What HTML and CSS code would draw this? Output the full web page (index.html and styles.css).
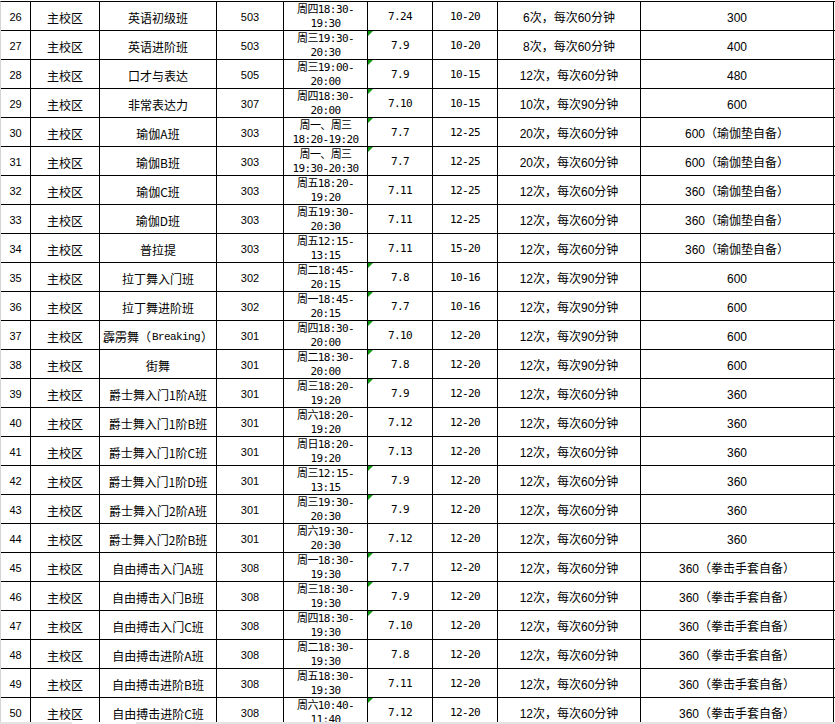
FILE: index.html
```html
<!DOCTYPE html>
<html lang="zh-CN">
<head>
<meta charset="utf-8">
<title>课程表</title>
<link rel="stylesheet" href="styles.css">
</head>
<body>
<div class="page">
  <div class="sheet">
    <div class="row"><div class="c n">26</div><div class="c">主校区</div><div class="c">英语初级班</div><div class="c n">503</div><div class="c m two">周四18:30-<br>19:30</div><div class="c m">7.24</div><div class="c m">10-20</div><div class="c s">6次，每次60分钟</div><div class="c s">300</div></div>
    <div class="row"><div class="c n">27</div><div class="c">主校区</div><div class="c">英语进阶班</div><div class="c n">503</div><div class="c m two">周三19:30-<br>20:30</div><div class="c m tri">7.9</div><div class="c m">10-20</div><div class="c s">8次，每次60分钟</div><div class="c s">400</div></div>
    <div class="row"><div class="c n">28</div><div class="c">主校区</div><div class="c">口才与表达</div><div class="c n">505</div><div class="c m two">周三19:00-<br>20:00</div><div class="c m tri">7.9</div><div class="c m">10-15</div><div class="c s">12次，每次60分钟</div><div class="c s">480</div></div>
    <div class="row"><div class="c n">29</div><div class="c">主校区</div><div class="c">非常表达力</div><div class="c n">307</div><div class="c m two">周四18:30-<br>20:00</div><div class="c m tri">7.10</div><div class="c m">10-15</div><div class="c s">10次，每次90分钟</div><div class="c s">600</div></div>
    <div class="row"><div class="c n">30</div><div class="c">主校区</div><div class="c">瑜伽A班</div><div class="c n">303</div><div class="c m two">周一、周三<br>18:20-19:20</div><div class="c m tri">7.7</div><div class="c m">12-25</div><div class="c s">20次，每次60分钟</div><div class="c s">600（瑜伽垫自备）</div></div>
    <div class="row"><div class="c n">31</div><div class="c">主校区</div><div class="c">瑜伽B班</div><div class="c n">303</div><div class="c m two">周一、周三<br>19:30-20:30</div><div class="c m tri">7.7</div><div class="c m">12-25</div><div class="c s">20次，每次60分钟</div><div class="c s">600（瑜伽垫自备）</div></div>
    <div class="row"><div class="c n">32</div><div class="c">主校区</div><div class="c">瑜伽C班</div><div class="c n">303</div><div class="c m two">周五18:20-<br>19:20</div><div class="c m">7.11</div><div class="c m">12-25</div><div class="c s">12次，每次60分钟</div><div class="c s">360（瑜伽垫自备）</div></div>
    <div class="row"><div class="c n">33</div><div class="c">主校区</div><div class="c">瑜伽D班</div><div class="c n">303</div><div class="c m two">周五19:30-<br>20:30</div><div class="c m">7.11</div><div class="c m">12-25</div><div class="c s">12次，每次60分钟</div><div class="c s">360（瑜伽垫自备）</div></div>
    <div class="row"><div class="c n">34</div><div class="c">主校区</div><div class="c">普拉提</div><div class="c n">303</div><div class="c m two">周五12:15-<br>13:15</div><div class="c m">7.11</div><div class="c m">15-20</div><div class="c s">12次，每次60分钟</div><div class="c s">360（瑜伽垫自备）</div></div>
    <div class="row"><div class="c n">35</div><div class="c">主校区</div><div class="c">拉丁舞入门班</div><div class="c n">302</div><div class="c m two">周二18:45-<br>20:15</div><div class="c m tri">7.8</div><div class="c m">10-16</div><div class="c s">12次，每次90分钟</div><div class="c s">600</div></div>
    <div class="row"><div class="c n">36</div><div class="c">主校区</div><div class="c">拉丁舞进阶班</div><div class="c n">302</div><div class="c m two">周一18:45-<br>20:15</div><div class="c m tri">7.7</div><div class="c m">10-16</div><div class="c s">12次，每次90分钟</div><div class="c s">600</div></div>
    <div class="row"><div class="c n">37</div><div class="c">主校区</div><div class="c">霹雳舞（<span class="lat">Breaking</span>）</div><div class="c n">301</div><div class="c m two">周四18:30-<br>20:00</div><div class="c m tri">7.10</div><div class="c m">12-20</div><div class="c s">12次，每次90分钟</div><div class="c s">600</div></div>
    <div class="row"><div class="c n">38</div><div class="c">主校区</div><div class="c">街舞</div><div class="c n">301</div><div class="c m two">周二18:30-<br>20:00</div><div class="c m tri">7.8</div><div class="c m">12-20</div><div class="c s">12次，每次90分钟</div><div class="c s">600</div></div>
    <div class="row"><div class="c n">39</div><div class="c">主校区</div><div class="c">爵士舞入门1阶A班</div><div class="c n">301</div><div class="c m two">周三18:20-<br>19:20</div><div class="c m tri">7.9</div><div class="c m">12-20</div><div class="c s">12次，每次60分钟</div><div class="c s">360</div></div>
    <div class="row"><div class="c n">40</div><div class="c">主校区</div><div class="c">爵士舞入门1阶B班</div><div class="c n">301</div><div class="c m two">周六18:20-<br>19:20</div><div class="c m">7.12</div><div class="c m">12-20</div><div class="c s">12次，每次60分钟</div><div class="c s">360</div></div>
    <div class="row"><div class="c n">41</div><div class="c">主校区</div><div class="c">爵士舞入门1阶C班</div><div class="c n">301</div><div class="c m two">周日18:20-<br>19:20</div><div class="c m">7.13</div><div class="c m">12-20</div><div class="c s">12次，每次60分钟</div><div class="c s">360</div></div>
    <div class="row"><div class="c n">42</div><div class="c">主校区</div><div class="c">爵士舞入门1阶D班</div><div class="c n">301</div><div class="c m two">周三12:15-<br>13:15</div><div class="c m tri">7.9</div><div class="c m">12-20</div><div class="c s">12次，每次60分钟</div><div class="c s">360</div></div>
    <div class="row"><div class="c n">43</div><div class="c">主校区</div><div class="c">爵士舞入门2阶A班</div><div class="c n">301</div><div class="c m two">周三19:30-<br>20:30</div><div class="c m tri">7.9</div><div class="c m">12-20</div><div class="c s">12次，每次60分钟</div><div class="c s">360</div></div>
    <div class="row"><div class="c n">44</div><div class="c">主校区</div><div class="c">爵士舞入门2阶B班</div><div class="c n">301</div><div class="c m two">周六19:30-<br>20:30</div><div class="c m">7.12</div><div class="c m">12-20</div><div class="c s">12次，每次60分钟</div><div class="c s">360</div></div>
    <div class="row"><div class="c n">45</div><div class="c">主校区</div><div class="c">自由搏击入门A班</div><div class="c n">308</div><div class="c m two">周一18:30-<br>19:30</div><div class="c m tri">7.7</div><div class="c m">12-20</div><div class="c s">12次，每次60分钟</div><div class="c s">360（拳击手套自备）</div></div>
    <div class="row"><div class="c n">46</div><div class="c">主校区</div><div class="c">自由搏击入门B班</div><div class="c n">308</div><div class="c m two">周三18:30-<br>19:30</div><div class="c m tri">7.9</div><div class="c m">12-20</div><div class="c s">12次，每次60分钟</div><div class="c s">360（拳击手套自备）</div></div>
    <div class="row"><div class="c n">47</div><div class="c">主校区</div><div class="c">自由搏击入门C班</div><div class="c n">308</div><div class="c m two">周四18:30-<br>19:30</div><div class="c m tri">7.10</div><div class="c m">12-20</div><div class="c s">12次，每次60分钟</div><div class="c s">360（拳击手套自备）</div></div>
    <div class="row"><div class="c n">48</div><div class="c">主校区</div><div class="c">自由搏击进阶A班</div><div class="c n">308</div><div class="c m two">周二18:30-<br>19:30</div><div class="c m">7.8</div><div class="c m">12-20</div><div class="c s">12次，每次60分钟</div><div class="c s">360（拳击手套自备）</div></div>
    <div class="row"><div class="c n">49</div><div class="c">主校区</div><div class="c">自由搏击进阶B班</div><div class="c n">308</div><div class="c m two">周五18:30-<br>19:30</div><div class="c m">7.11</div><div class="c m">12-20</div><div class="c s">12次，每次60分钟</div><div class="c s">360（拳击手套自备）</div></div>
    <div class="row"><div class="c n">50</div><div class="c">主校区</div><div class="c">自由搏击进阶C班</div><div class="c n">308</div><div class="c m two">周六10:40-<br>11:40</div><div class="c m tri">7.12</div><div class="c m">12-20</div><div class="c s">12次，每次60分钟</div><div class="c s">360（拳击手套自备）</div></div>
  </div>
  <div class="tabs"><div class="tab"></div></div>
</div>
</body>
</html>
```

FILE: styles.css
```css
html, body {
  margin: 0;
  padding: 0;
  background: #fff;
}
.page {
  height: 724px;
  display: flex;
  flex-direction: column;
  overflow: hidden;
}
.sheet {
  flex: 1;
  overflow: hidden;
  margin-top: 1px;
  border-top: 1px solid #000;
  border-left: 1px solid #d4d4d4;
  font-family: "Noto Sans CJK SC", sans-serif;
  font-size: 12px;
  color: #000;
}
.row {
  display: grid;
  grid-template-columns: 30px 69px 117px 67px 84px 65px 65px 143px 193px;
  height: 29px;
  box-sizing: border-box;
  border-bottom: 1px solid #000;
}
.c {
  border-right: 1px solid #000;
  display: flex;
  align-items: center;
  justify-content: center;
  padding-top: 3px;
  box-sizing: border-box;
  height: 28px;
  line-height: 14px;
  white-space: nowrap;
  text-align: center;
  overflow: hidden;
}
.n {
  font-family: "Liberation Sans", sans-serif;
  font-size: 11px;
  padding-top: 2px;
}
.s {
  font-family: "Liberation Sans", "Noto Sans CJK SC", sans-serif;
}
.m {
  font-family: "DejaVu Sans Mono", "Noto Sans CJK SC", monospace;
  font-size: 11px;
  letter-spacing: -0.62px;
  padding-top: 2px;
}
.two {
  display: block;
  padding-top: 1px;
  line-height: 13.5px;
}
.lat {
  font-family: "Liberation Mono", monospace;
  font-size: 11px;
  letter-spacing: -0.6px;
  padding: 0 1px;
}
.tri {
  position: relative;
}
.tri::before {
  content: "";
  position: absolute;
  left: 0;
  top: 0;
  border-top: 5px solid #119a11;
  border-right: 5px solid transparent;
}
.tabs {
  height: 2px;
  background: #e4e4e4;
  display: flex;
}
.tab {
  margin-left: 72px;
  width: 64px;
  background: #fff;
}
```
